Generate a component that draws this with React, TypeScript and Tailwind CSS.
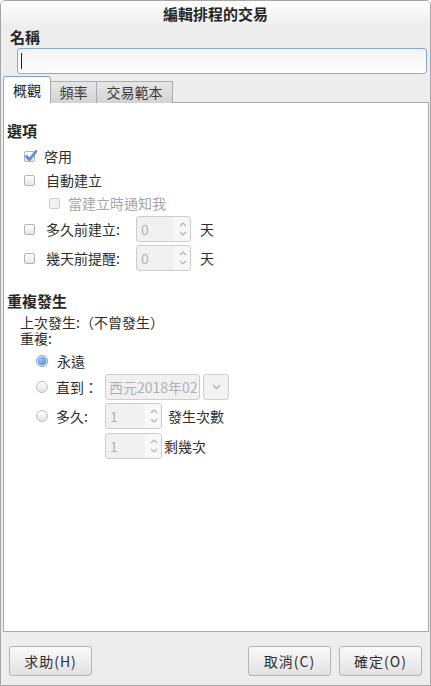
import React from "react"

const font = "font-['Noto_Sans_CJK_TC','Noto_Sans_CJK_SC',sans-serif]"

const Checkbox = ({ checked = false, disabled = false }: { checked?: boolean; disabled?: boolean }) => (
  <span
    className={`relative inline-block w-[11px] h-[11px] shrink-0 rounded-[2px] border ${
      disabled ? "border-[#cfcfcf] bg-[#f2f2f2]" : "border-[#b3b3b3] bg-gradient-to-b from-white to-[#e6e6e6]"
    }`}
  >
    {checked && (
      <svg className="absolute left-[-1px] top-[-3px]" width="14" height="14" viewBox="0 0 14 14">
        <path d="M2.5 7.5 L5.5 10.5 L12 2.5" fill="none" stroke="#3f74c2" strokeWidth="2.6" strokeLinecap="round" strokeLinejoin="round" />
        <path d="M2.5 7.5 L5.5 10.5 L12 2.5" fill="none" stroke="#8fb6ea" strokeWidth="1" strokeLinecap="round" strokeLinejoin="round" />
      </svg>
    )}
  </span>
)

const Radio = ({ checked = false }: { checked?: boolean }) =>
  checked ? (
    <span className="inline-flex items-center justify-center w-[12px] h-[12px] shrink-0 rounded-full border border-[#7f9fcc] bg-[#dbe7f6]">
      <span className="w-[8px] h-[8px] rounded-full bg-[radial-gradient(circle_at_40%_35%,#9cc6f3,#3d7fd3)]" />
    </span>
  ) : (
    <span className="inline-block w-[12px] h-[12px] shrink-0 rounded-full border border-[#bcbcbc] bg-gradient-to-b from-white to-[#e4e4e4]" />
  )

const Spin = ({ value, width }: { value: string; width: string }) => (
  <div className={`${width} h-[26px] flex rounded-[3px] border border-[#cdcdcd] bg-[#f1f1f1]`}>
    <div className="flex-1 flex items-center pl-[4px] text-[14px] text-[#b3b3b3]">{value}</div>
    <div className="w-[16px] flex flex-col items-center justify-center border-l border-[#f9f9f9] bg-[#f7f7f7] rounded-r-[3px]">
      <svg width="8" height="5" viewBox="0 0 8 5" className="mb-[4px]">
        <path d="M1 4 L4 1 L7 4" fill="none" stroke="#b3b3b3" strokeWidth="1.2" />
      </svg>
      <svg width="8" height="5" viewBox="0 0 8 5">
        <path d="M1 1 L4 4 L7 1" fill="none" stroke="#b3b3b3" strokeWidth="1.2" />
      </svg>
    </div>
  </div>
)

const Button = ({ label }: { label: string }) => (
  <button className="w-[83px] h-[30px] rounded-[3px] border border-[#b5b5b5] bg-gradient-to-b from-[#fafafa] to-[#e2e2e2] text-[14px] text-[#2e2e2e] tracking-[1px]">
    {label}
  </button>
)

export default function App() {
  return (
    <div
      className={`w-[431px] h-[686px] flex flex-col bg-[#ededed] border border-[#a6a6a6] rounded-t-[5px] overflow-hidden text-[14px] text-[#2e2e2e] ${font}`}
    >
      <div className="h-[26px] shrink-0 flex items-center justify-center bg-gradient-to-b from-white to-[#ededed] font-bold text-[15px] text-[#262626]">
        編輯排程的交易
      </div>
      <div className="h-[21px] shrink-0 pl-[9px] flex items-center font-bold text-[15px] text-[#262626]">名稱</div>
      <div className="h-[26px] shrink-0 ml-[16px] mr-[3px] rounded-[3px] border border-[#86a9dc] bg-gradient-to-b from-[#f3f3f3] to-white flex items-center pl-[3px]">
        <span className="w-px h-[16px] bg-[#222]" />
      </div>

      <div className="h-[26px] shrink-0 mt-[3px] ml-[2px] flex items-end relative z-10 -mb-px">
        <div className="h-[27px] w-[48px] flex items-center justify-center bg-white border border-b-0 border-[#a8a8a8] border-t-[#7ea3d6] rounded-t-[3px] text-[#262626]">
          概觀
        </div>
        <div className="h-[22px] w-[46px] flex items-center justify-center bg-gradient-to-b from-[#e6e6e6] to-[#d3d3d3] border border-l-0 border-b-0 border-[#acacac] text-[#3a3a3a]">
          頻率
        </div>
        <div className="h-[22px] w-[76px] flex items-center justify-center bg-gradient-to-b from-[#e6e6e6] to-[#d3d3d3] border border-l-0 border-b-0 border-[#acacac] text-[#3a3a3a]">
          交易範本
        </div>
      </div>

      <div className="h-[530px] shrink-0 ml-[2px] mr-[1px] bg-white border border-[#a8a8a8] px-[3px] pt-[19px]">
        <div className="h-[18px] flex items-center font-bold text-[15px] text-[#262626]">選項</div>

        <div className="pl-[17px]">
          <div className="h-[18px] mt-[7px] flex items-center gap-[9px]">
            <Checkbox checked />
            <span>啓用</span>
          </div>
          <div className="h-[18px] mt-[6px] flex items-center gap-[11px]">
            <Checkbox />
            <span>自動建立</span>
          </div>
          <div className="h-[18px] mt-[5px] ml-[25px] flex items-center gap-[8px] text-[#a6a6a6]">
            <Checkbox disabled />
            <span>當建立時通知我</span>
          </div>
          <div className="h-[26px] mt-[4px] flex items-center">
            <Checkbox />
            <span className="ml-[11px] w-[90px]">多久前建立:</span>
            <Spin value="0" width="w-[55px]" />
            <span className="ml-[9px]">天</span>
          </div>
          <div className="h-[26px] mt-[3px] flex items-center">
            <Checkbox />
            <span className="ml-[11px] w-[90px]">幾天前提醒:</span>
            <Spin value="0" width="w-[55px]" />
            <span className="ml-[9px]">天</span>
          </div>
        </div>

        <div className="h-[18px] mt-[21px] flex items-center font-bold text-[15px] text-[#262626]">重複發生</div>
        <div className="pl-[13px] mt-[4px] leading-[16px]">
          <div>上次發生:（不曾發生）</div>
          <div>重複:</div>
        </div>

        <div className="pl-[29px]">
          <div className="h-[18px] mt-[6px] flex items-center gap-[9px]">
            <Radio checked />
            <span>永遠</span>
          </div>
          <div className="h-[26px] mt-[4px] flex items-center">
            <Radio />
            <span className="ml-[8px] w-[49px]">直到：</span>
            <div className="w-[95px] h-[26px] rounded-[3px] border border-[#cdcdcd] bg-[#f1f1f1] flex items-center pl-[3px] overflow-hidden whitespace-nowrap text-[#b0b0b0]">
              西元2018年02
            </div>
            <div className="ml-[3px] w-[26px] h-[26px] rounded-[3px] border border-[#d0d0d0] bg-[#f3f3f3] flex items-center justify-center">
              <svg width="9" height="6" viewBox="0 0 9 6">
                <path d="M1 1 L4.5 4.5 L8 1" fill="none" stroke="#b0b0b0" strokeWidth="1.3" />
              </svg>
            </div>
          </div>
          <div className="h-[26px] mt-[3px] flex items-center">
            <Radio />
            <span className="ml-[8px] w-[49px]">多久:</span>
            <Spin value="1" width="w-[57px]" />
            <span className="ml-[6px]">發生次數</span>
          </div>
          <div className="h-[26px] mt-[4px] flex items-center pl-[69px]">
            <Spin value="1" width="w-[57px]" />
            <span className="ml-[2px]">剩幾次</span>
          </div>
        </div>
      </div>

      <div className="flex-1 flex items-start pt-[14px] pl-[8px] pr-[8px]">
        <Button label="求助(H)" />
        <div className="flex-1" />
        <Button label="取消(C)" />
        <div className="w-[8px]" />
        <Button label="確定(O)" />
      </div>
    </div>
  )
}
